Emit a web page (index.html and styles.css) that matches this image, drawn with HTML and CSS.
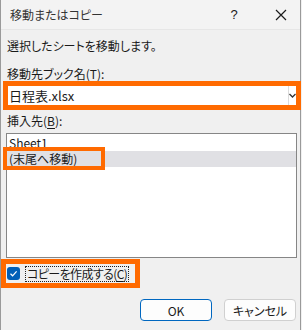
FILE: index.html
```html
<!DOCTYPE html>
<html lang="ja">
<head>
  <meta charset="UTF-8">
  <title>移動またはコピー</title>
  <link rel="stylesheet" href="styles.css">
</head>
<body>
  <div class="window">
    <div class="titlebar">
      <span class="title">移動またはコピー</span>
      <span class="help">?</span>
      <span class="close">
        <svg width="12" height="12" viewBox="0 0 12 12"><path d="M1 1 L11 11 M11 1 L1 11" stroke="#1a1a1a" stroke-width="1.2" fill="none"/></svg>
      </span>
    </div>

    <div class="content">
      <p class="message">選択したシートを移動します。</p>

      <label class="field-label">移動先ブック名(<u>T</u>):</label>
      <div class="combo mark">
        <span class="combo-value">日程表.xlsx</span>
        <span class="combo-arrow">
          <svg width="7" height="5" viewBox="0 0 7 5"><path d="M0.5 1 L3.5 4 L6.5 1" stroke="#333" stroke-width="1.3" fill="none"/></svg>
        </span>
      </div>

      <label class="field-label">挿入先(<u>B</u>):</label>
      <ul class="listbox">
        <li>Sheet1</li>
        <li class="selected"><span class="item-mark">(末尾へ移動)</span></li>
      </ul>

      <div class="check-row mark">
        <span class="checkbox">
          <svg width="9" height="9" viewBox="0 0 9 9"><path d="M1.5 4.8 L3.6 6.8 L7.6 2.4" stroke="#fff" stroke-width="1.2" fill="none"/></svg>
        </span>
        <span class="check-label">コピーを作成する(<u>C</u>)</span>
      </div>

      <div class="buttons">
        <button class="btn primary">OK</button>
        <button class="btn">キャンセル</button>
      </div>
    </div>
  </div>
</body>
</html>
```

FILE: styles.css
```css
body {
  margin: 0;
  width: 302px;
  height: 330px;
  background-color: #f0f0f0;
  font-family: "Noto Sans CJK JP", "Noto Sans", sans-serif;
  font-size: 12px;
  font-feature-settings: "palt";
  color: #1a1a1a;
  overflow: hidden;
}

.window {
  width: 299px;
  height: 330px;
  border-left: 1px solid #9a9a9a;
  border-right: 1px solid #9a9a9a;
  background-color: #f0f0f0;
}

.titlebar {
  height: 30px;
  display: flex;
  align-items: center;
  background-color: #f3f3f3;
  border-bottom: 1px solid #e6e6e6;
  box-sizing: border-box;
}

.title {
  margin-left: 9px;
  flex: 1;
  color: #333;
}

.help {
  width: 14px;
  text-align: center;
  font-family: "Liberation Sans", sans-serif;
  font-size: 13px;
  margin-right: 34px;
}

.close {
  display: flex;
  margin-right: 13px;
}

.content {
  padding: 8px 3px 0 5px;
  display: flex;
  flex-direction: column;
}

.message,
.field-label {
  margin: 0;
  padding-left: 1px;
  line-height: 16px;
}

.message {
  margin-bottom: 12px;
}

.field-label u,
.check-label u {
  text-decoration-thickness: 1px;
  text-underline-offset: 2px;
}

.mark {
  outline: 5px solid #ff6a00;
}

.combo {
  display: flex;
  align-items: center;
  height: 19px;
  margin: 4px 1px 8px 2px;
  background-color: #fff;
}

.combo-value {
  flex: 1;
  padding-left: 1px;
  font-size: 13px;
}

.combo-arrow {
  width: 7px;
  height: 19px;
  display: flex;
  align-items: center;
  justify-content: center;
  border-left: 1px solid #dcdcdc;
}

.listbox {
  list-style: none;
  margin: 4px 0 0 0;
  padding: 1px 0;
  height: 121px;
  border: 1px solid #868686;
  background-color: #fff;
}

.listbox li {
  height: 16px;
  line-height: 16px;
  padding-left: 2px;
}

.listbox li.selected {
  background-color: #e0e0e4;
  padding-left: 0;
}

.item-mark {
  display: inline-block;
  width: 92px;
  height: 15px;
  padding-left: 2px;
  outline: 4px solid #ff6a00;
}

.check-row {
  display: flex;
  align-items: center;
  width: 129px;
  height: 19px;
  margin: 6px 0 0 0;
}

.checkbox {
  flex-shrink: 0;
  width: 13px;
  height: 13px;
  margin-left: 1px;
  border-radius: 3px;
  background-color: #005fb8;
  display: flex;
  align-items: center;
  justify-content: center;
}

.check-label {
  flex-shrink: 0;
  white-space: nowrap;
  margin-left: 5px;
  padding: 0 1px;
  line-height: 14px;
  letter-spacing: -0.6px;
  border: 1px dotted #222;
}

.buttons {
  display: flex;
  justify-content: flex-end;
  gap: 12px;
  margin: 16px 1px 0 0;
}

.btn {
  width: 72px;
  height: 22px;
  padding: 0;
  font-family: "Noto Sans CJK JP", "Noto Sans", sans-serif;
  font-size: 12px;
  font-feature-settings: "palt";
  color: #1a1a1a;
  background-color: #fdfdfd;
  border: 1px solid #d0d0d0;
  border-radius: 4px;
}

.btn.primary {
  border: 1px solid #0067c0;
}
```
